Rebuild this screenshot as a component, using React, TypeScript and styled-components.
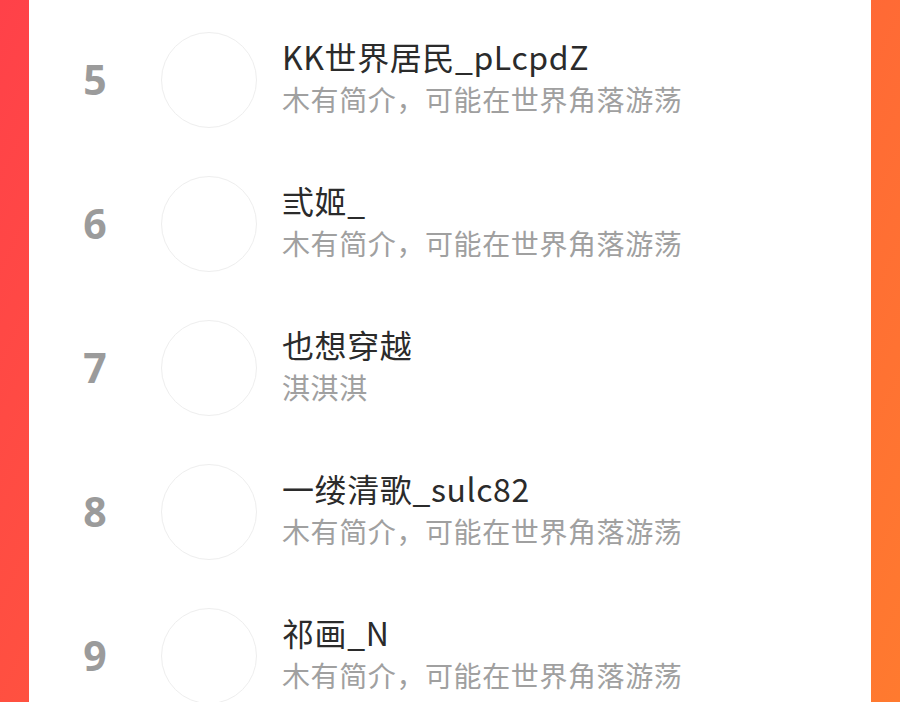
import React from 'react';
import styled, { createGlobalStyle } from 'styled-components';

const GlobalStyle = createGlobalStyle`
  html, body {
    margin: 0;
    padding: 0;
    height: 100%;
  }
  body {
    font-family: "Noto Sans CJK SC", "Noto Sans", sans-serif;
    background: linear-gradient(115deg, #ff4149 0%, #ff5a3b 45%, #ff7a2f 100%);
    overflow: hidden;
  }
`;

type Member = {
  rank: number;
  name: string;
  intro: string;
};

const MEMBERS: Member[] = [
  { rank: 5, name: 'KK世界居民_pLcpdZ', intro: '木有简介，可能在世界角落游荡' },
  { rank: 6, name: '弎姬_', intro: '木有简介，可能在世界角落游荡' },
  { rank: 7, name: '也想穿越', intro: '淇淇淇' },
  { rank: 8, name: '一缕清歌_sulc82', intro: '木有简介，可能在世界角落游荡' },
  { rank: 9, name: '祁画_N', intro: '木有简介，可能在世界角落游荡' },
];

const App = () => {
  return (
    <>
      <GlobalStyle />
      <Page>
        <Card>
          {MEMBERS.map((m) => (
            <Row key={m.rank}>
              <Rank>{m.rank}</Rank>
              <Avatar />
              <Info>
                <Name>{m.name}</Name>
                <Intro>{m.intro}</Intro>
              </Info>
            </Row>
          ))}
        </Card>
      </Page>
    </>
  );
};

export default App;

const Page = styled.div`
  height: 702px;
  padding: 0 29px;
  box-sizing: border-box;
`;

const Card = styled.div`
  background: #fff;
  height: 100%;
  padding-top: 8px;
  box-sizing: border-box;
`;

const Row = styled.div`
  display: flex;
  align-items: center;
  height: 144px;
`;

const Rank = styled.div`
  width: 132px;
  text-align: center;
  font-family: "Open Sans", "Noto Sans", sans-serif;
  font-size: 41px;
  font-weight: 700;
  color: #9b9b9b;
  line-height: 1;
  padding-bottom: 2px;
`;

const Avatar = styled.div`
  width: 94px;
  height: 94px;
  border-radius: 50%;
  border: 1px solid #eeeeee;
  flex-shrink: 0;
`;

const Info = styled.div`
  display: flex;
  flex-direction: column;
  margin-left: 25px;
  padding-bottom: 6px;
`;

const Name = styled.div`
  font-size: 32px;
  line-height: 40px;
  margin-bottom: 4px;
  letter-spacing: 0.6px;
  color: #2b2b2b;
`;

const Intro = styled.div`
  font-size: 28px;
  line-height: 38px;
  letter-spacing: 0.6px;
  color: #a0a0a0;
`;
